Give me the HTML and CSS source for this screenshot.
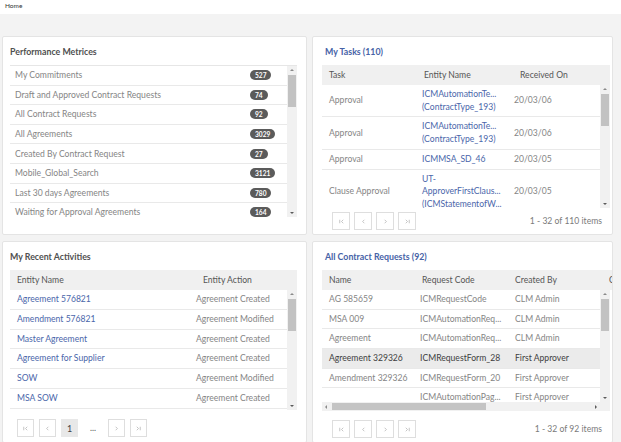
FILE: index.html
```html
<!DOCTYPE html>
<html>
<head>
<meta charset="utf-8">
<link rel="stylesheet" href="styles.css">
</head>
<body>
<div class="topbar">Home</div>
<main class="dash">

  <section class="panel">
    <h2 class="ptitle">Performance Metrices</h2>
    <div class="listwrap">
      <ul class="mlist">
        <li><span>My Commitments</span><span class="badge">527</span></li>
        <li><span>Draft and Approved Contract Requests</span><span class="badge">74</span></li>
        <li><span>All Contract Requests</span><span class="badge">92</span></li>
        <li><span>All Agreements</span><span class="badge">3029</span></li>
        <li><span>Created By Contract Request</span><span class="badge">27</span></li>
        <li><span>Mobile_Global_Search</span><span class="badge">3121</span></li>
        <li><span>Last 30 days Agreements</span><span class="badge">780</span></li>
        <li><span>Waiting for Approval Agreements</span><span class="badge">164</span></li>
      </ul>
      <div class="vscroll"><span class="arr up"></span><span class="thumb"></span><span class="fill"></span><span class="arr dn"></span></div>
    </div>
  </section>

  <section class="panel right">
    <h2 class="ptitle link">My Tasks (110)</h2>
    <div class="grid tasks">
      <div class="ghead"><span>Task</span><span>Entity Name</span><span>Received On</span></div>
      <div class="gbody">
        <div class="grows">
          <div class="grow"><span>Approval</span><span class="lnk">ICMAutomationTe...<br>(ContractType_193)</span><span>20/03/06</span></div>
          <div class="grow"><span>Approval</span><span class="lnk">ICMAutomationTe...<br>(ContractType_193)</span><span>20/03/06</span></div>
          <div class="grow"><span>Approval</span><span class="lnk">ICMMSA_SD_46</span><span>20/03/05</span></div>
          <div class="grow"><span>Clause Approval</span><span class="lnk">UT-<br>ApproverFirstClaus...<br>(ICMStatementofW...</span><span>20/03/05</span></div>
        </div>
        <div class="vscroll"><span class="arr up"></span><span class="thumb"></span><span class="fill"></span><span class="arr dn"></span></div>
      </div>
    </div>
    <div class="pager">
      <span class="pbtn"><svg viewBox="0 0 8 8"><path d="M2 2v4M6 2L4 4l2 2"/></svg></span>
      <span class="pbtn"><svg viewBox="0 0 8 8"><path d="M5 2L3 4l2 2"/></svg></span>
      <span class="pbtn"><svg viewBox="0 0 8 8"><path d="M3 2l2 2-2 2"/></svg></span>
      <span class="pbtn"><svg viewBox="0 0 8 8"><path d="M2 2l2 2-2 2M6 2v4"/></svg></span>
      <span class="pinfo">1 - 32 of 110 items</span>
    </div>
  </section>

  <section class="panel">
    <h2 class="ptitle">My Recent Activities</h2>
    <div class="grid recent">
      <div class="ghead"><span>Entity Name</span><span>Entity Action</span></div>
      <div class="gbody">
        <div class="grows">
          <div class="grow"><span class="lnk">Agreement 576821</span><span>Agreement Created</span></div>
          <div class="grow"><span class="lnk">Amendment 576821</span><span>Agreement Modified</span></div>
          <div class="grow"><span class="lnk">Master Agreement</span><span>Agreement Created</span></div>
          <div class="grow"><span class="lnk">Agreement for Supplier</span><span>Agreement Created</span></div>
          <div class="grow"><span class="lnk">SOW</span><span>Agreement Modified</span></div>
          <div class="grow"><span class="lnk">MSA SOW</span><span>Agreement Created</span></div>
        </div>
        <div class="vscroll"><span class="arr up"></span><span class="thumb"></span><span class="fill"></span><span class="arr dn"></span></div>
      </div>
    </div>
    <div class="pager wide">
      <span class="pbtn"><svg viewBox="0 0 8 8"><path d="M2 2v4M6 2L4 4l2 2"/></svg></span>
      <span class="pbtn"><svg viewBox="0 0 8 8"><path d="M5 2L3 4l2 2"/></svg></span>
      <span class="pbtn cur">1</span>
      <span class="pdots">...</span>
      <span class="pbtn"><svg viewBox="0 0 8 8"><path d="M3 2l2 2-2 2"/></svg></span>
      <span class="pbtn"><svg viewBox="0 0 8 8"><path d="M2 2l2 2-2 2M6 2v4"/></svg></span>
    </div>
  </section>

  <section class="panel right">
    <h2 class="ptitle link">All Contract Requests (92)</h2>
    <div class="grid requests">
      <div class="ghead"><span>Name</span><span>Request Code</span><span>Created By</span><span>C</span></div>
      <div class="gbody">
        <div class="grows">
          <div class="grow"><span>AG 585659</span><span>ICMRequestCode</span><span>CLM Admin</span></div>
          <div class="grow"><span>MSA 009</span><span>ICMAutomationReq...</span><span>CLM Admin</span></div>
          <div class="grow"><span>Agreement</span><span>ICMAutomationReq...</span><span>CLM Admin</span></div>
          <div class="grow sel"><span>Agreement 329326</span><span>ICMRequestForm_28</span><span>First Approver</span></div>
          <div class="grow"><span>Amendment 329326</span><span>ICMRequestForm_20</span><span>First Approver</span></div>
          <div class="grow"><span></span><span>ICMAutomationPag...</span><span>First Approver</span></div>
        </div>
        <div class="vscroll"><span class="arr up"></span><span class="thumb"></span><span class="fill"></span><span class="arr dn"></span></div>
      </div>
      <div class="hscrollrow">
        <div class="hscroll"><span class="harr lf"></span><span class="hthumb"></span><span class="fill"></span><span class="harr rt"></span></div>
        <div class="corner"></div>
      </div>
    </div>
    <div class="pager low">
      <span class="pbtn"><svg viewBox="0 0 8 8"><path d="M2 2v4M6 2L4 4l2 2"/></svg></span>
      <span class="pbtn"><svg viewBox="0 0 8 8"><path d="M5 2L3 4l2 2"/></svg></span>
      <span class="pbtn"><svg viewBox="0 0 8 8"><path d="M3 2l2 2-2 2"/></svg></span>
      <span class="pbtn"><svg viewBox="0 0 8 8"><path d="M2 2l2 2-2 2M6 2v4"/></svg></span>
      <span class="pinfo">1 - 32 of 92 items</span>
    </div>
  </section>

</main>
</body>
</html>
```

FILE: styles.css
```css
* { box-sizing: border-box; }
html, body { margin: 0; padding: 0; }
body {
  background: #f3f3f3;
  font-family: Lato, "Open Sans", sans-serif;
  font-size: 8.6px;
  color: #858585;
  width: 621px;
  height: 442px;
  overflow: hidden;
}
.topbar {
  height: 14px;
  background: #fff;
  font-size: 6.5px;
  color: #333;
  padding: 2px 0 0 5px;
}
.dash {
  display: grid;
  grid-template-columns: 305px 301px;
  grid-template-rows: 199px 202px;
  column-gap: 5px;
  row-gap: 6px;
  padding: 22px 0 0 2px;
}
.panel {
  background: #fff;
  border: 1px solid #e4e4e4;
  border-radius: 2px;
  padding: 0 9px 0 7px;
  overflow: hidden;
  display: flex;
  flex-direction: column;
}
.panel.right { padding-left: 9px; }
.ptitle {
  margin: 0;
  height: 28px;
  line-height: 29px;
  font-size: 8.8px;
  font-weight: 700;
  color: #505050;
  flex: none;
}
.ptitle.link { color: #4662a6; padding-left: 3px; }

/* metrics list */
.listwrap {
  display: flex;
  height: 152px;
  border-top: 1px solid #e6e6e6;
}
.mlist {
  list-style: none;
  margin: 0;
  padding: 0;
  flex: 1;
  overflow: hidden;
}
.mlist li {
  height: 19.6px;
  border-bottom: 1px solid #e9e9e9;
  display: flex;
  align-items: center;
  padding-left: 5px;
}
.mlist li span:first-child { width: 235px; }
.badge {
  background: #5b5b5b;
  color: #fff;
  font-size: 6.6px;
  font-weight: 700;
  border-radius: 5px;
  padding: 1px 5px;
  line-height: 8px;
  min-width: 17px;
  text-align: center;
}

/* scrollbars */
.vscroll {
  width: 10px;
  flex: none;
  background: #f1f1f1;
  display: flex;
  flex-direction: column;
  align-items: center;
}
.vscroll .arr {
  height: 9px;
  width: 10px;
  flex: none;
  position: relative;
}
.vscroll .arr::after {
  content: "";
  position: absolute;
  left: 3px;
  width: 0;
  height: 0;
  border-left: 2px solid transparent;
  border-right: 2px solid transparent;
}
.vscroll .up::after { top: 3px; border-bottom: 2px solid #8a8a8a; }
.vscroll .dn::after { top: 4px; border-top: 2px solid #5a5a5a; }
.vscroll .thumb {
  width: 8px;
  height: 32px;
  background: #c2c2c2;
  flex: none;
}
.fill { flex: 1; }

/* grids */
.grid { display: flex; flex-direction: column; flex: none; }
.ghead {
  display: grid;
  height: 20px;
  align-items: center;
  background: #f0f0f0;
  color: #555;
  white-space: nowrap;
  flex: none;
}
.ghead span { padding-left: 7px; overflow: hidden; }
.gbody { display: flex; overflow: hidden; }
.grows { flex: 1; overflow: hidden; }
.grow {
  display: grid;
  align-items: center;
  border-bottom: 1px solid #e9e9e9;
  min-height: 19.7px;
  line-height: 12.7px;
  padding: 3px 0;
  white-space: nowrap;
}
.grow span { padding-left: 7px; overflow: hidden; }
.lnk { color: #4a66aa; }
.grow.sel { background: #ebebeb; color: #3e3e3e; }

.tasks { margin-right: -7px; }
.tasks .ghead { grid-template-columns: 95px 96px 1fr; }
.tasks .gbody { height: 123px; }
.tasks .grow { grid-template-columns: 94px 91px 1fr; }
.tasks .grow span:nth-child(2) { padding-left: 6px; }

.recent .ghead { grid-template-columns: 186px 1fr; }
.recent .gbody { height: 120px; }
.recent .grow { grid-template-columns: 180px 1fr; padding: 0; height: 19.8px; }
.recent .grow span:nth-child(2) { padding-left: 6px; }

.requests { margin-right: -12px; }
.requests .ghead { grid-template-columns: 93px 93px 94px 20px; width: 300px; }
.requests .gbody { height: 112px; width: 288px; }
.requests .grow { grid-template-columns: 92px 94px 94px; padding: 0; height: 19.6px; }
.requests .grow span:nth-child(2) { padding-left: 6px; }

.hscrollrow { display: flex; height: 9px; width: 288px; }
.hscroll {
  flex: 1;
  background: #f1f1f1;
  display: flex;
  align-items: center;
}
.harr { width: 10px; height: 9px; position: relative; flex: none; }
.harr::after {
  content: "";
  position: absolute;
  top: 3px;
  width: 0;
  height: 0;
  border-top: 2px solid transparent;
  border-bottom: 2px solid transparent;
}
.harr.lf::after { left: 3px; border-right: 2px solid #8a8a8a; }
.harr.rt::after { left: 5px; border-left: 2px solid #5a5a5a; }
.hthumb { width: 154px; height: 7px; background: #c4c4c4; }
.corner { width: 10px; background: #f1f1f1; }

/* pager */
.pager {
  display: flex;
  align-items: center;
  gap: 4px;
  padding-left: 10px;
  margin-top: 4px;
  height: 18px;
  flex: none;
}
.pager.low { margin-top: 9px; }
.pager.wide { padding-left: 7px; gap: 5px; margin-top: 9px; }
.pbtn {
  width: 18px;
  height: 18px;
  border: 1px solid #dedede;
  display: flex;
  align-items: center;
  justify-content: center;
  background: #fff;
  color: #444;
  font-size: 9px;
  flex: none;
}
.pager.wide .pbtn { width: 17px; }
.pbtn svg { width: 7px; height: 7px; fill: none; stroke: #b5b5b5; stroke-width: 0.9; }
.pbtn.cur { background: #e8e8e8; border-color: #e8e8e8; }
.pdots { width: 20px; text-align: center; color: #555; }
.pinfo { margin-left: auto; padding-right: 1px; color: #7a7a7a; }
```
